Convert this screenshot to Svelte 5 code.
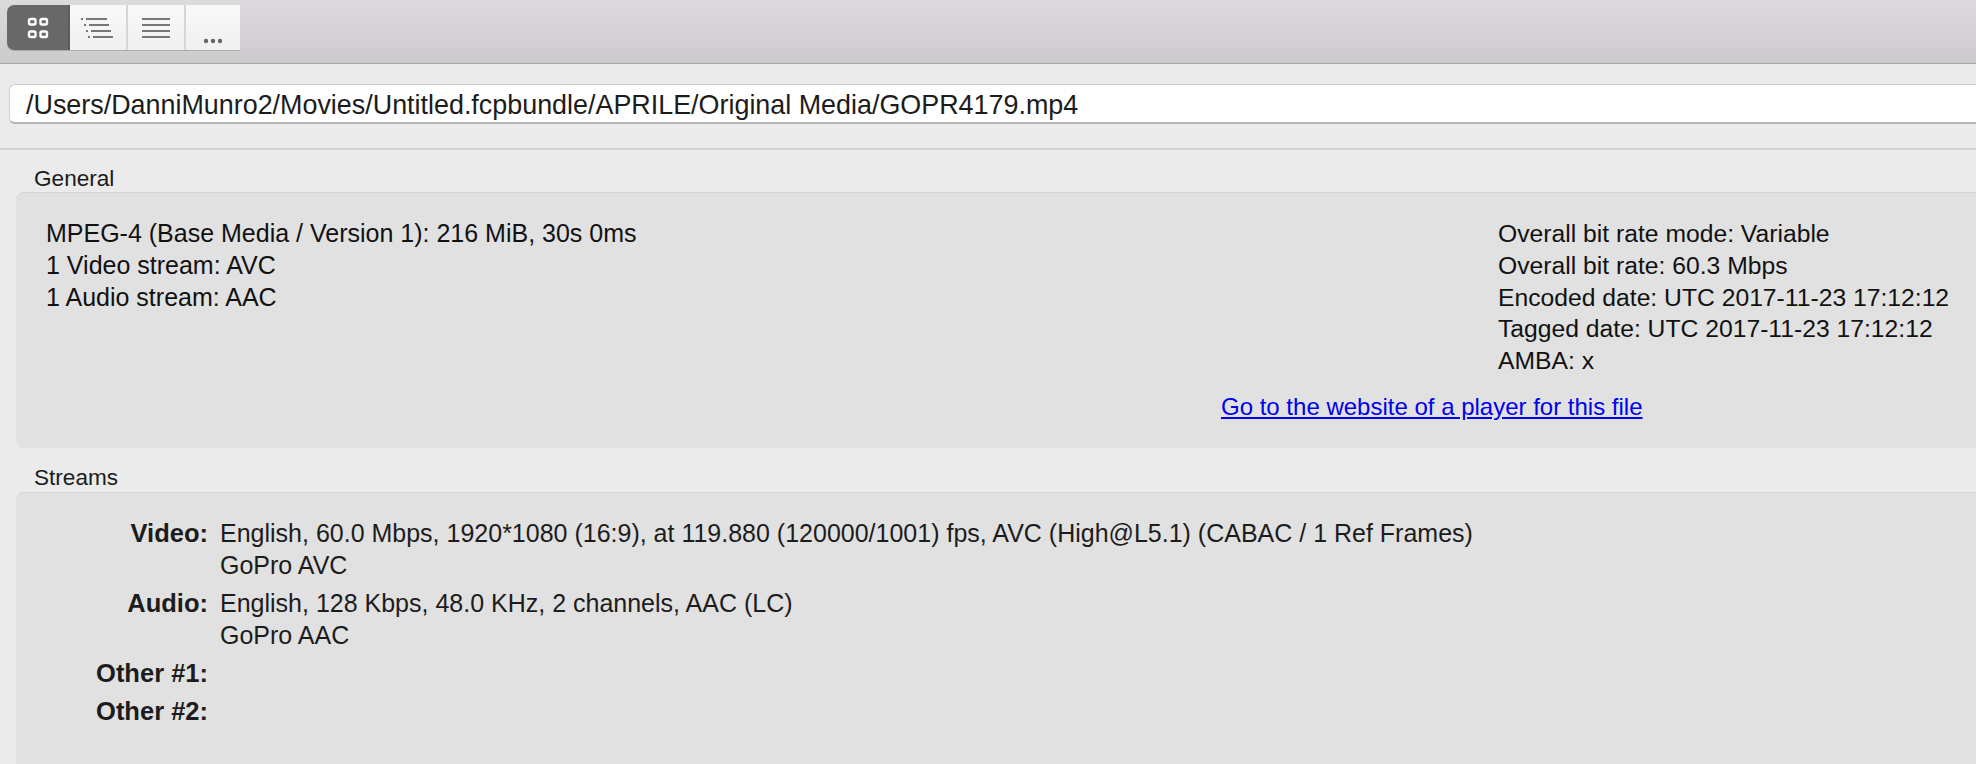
<script>
  const general = ['MPEG-4 (Base Media / Version 1): 216 MiB, 30s 0ms', '1 Video stream: AVC', '1 Audio stream: AAC'];
  const generalRight = [
    'Overall bit rate mode: Variable',
    'Overall bit rate: 60.3 Mbps',
    'Encoded date: UTC 2017-11-23 17:12:12',
    'Tagged date: UTC 2017-11-23 17:12:12',
    'AMBA: x'
  ];
  const streams = [
    { label: 'Video:', lines: ['English, 60.0 Mbps, 1920*1080 (16:9), at 119.880 (120000/1001) fps, AVC (High@L5.1) (CABAC / 1 Ref Frames)', 'GoPro AVC'] },
    { label: 'Audio:', lines: ['English, 128 Kbps, 48.0 KHz, 2 channels, AAC (LC)', 'GoPro AAC'] },
    { label: 'Other #1:', lines: [''] },
    { label: 'Other #2:', lines: [''] }
  ];
</script>

<div class="window">
  <div class="toolbar">
    <div class="segments">
      <div class="seg active">
        <svg width="22" height="22" viewBox="0 0 22 22" fill="none" stroke="#fff" stroke-width="2.4">
          <rect x="2" y="2" width="6.500" height="5.500" rx="1.500" />
          <rect x="13.500" y="2" width="6.500" height="5.500" rx="1.500" />
          <rect x="2" y="14.500" width="6.500" height="5.500" rx="1.500" />
          <rect x="13.500" y="14.500" width="6.500" height="5.500" rx="1.500" />
        </svg>
      </div>
      <div class="seg">
        <svg width="34" height="22" viewBox="0 0 34 22" stroke="#777" stroke-width="2">
          <path d="M0 2h2M5 2h21M3 8h2M8 8h20M5 14h2M10 14h20M7 20h2M12 20h20" />
        </svg>
      </div>
      <div class="seg">
        <svg width="30" height="22" viewBox="0 0 30 22" stroke="#777" stroke-width="2">
          <path d="M1 2h28M1 8h28M1 14h28M1 20h28" />
        </svg>
      </div>
      <div class="seg more">
        <svg width="20" height="6" viewBox="0 0 20 6" fill="#666">
          <circle cx="3" cy="3" r="2.200" /><circle cx="10" cy="3" r="2.200" /><circle cx="17" cy="3" r="2.200" />
        </svg>
      </div>
    </div>
  </div>

  <div class="path-row">
    <div class="path">/Users/DanniMunro2/Movies/Untitled.fcpbundle/APRILE/Original Media/GOPR4179.mp4</div>
  </div>

  <div class="content">
    <div class="group-title">General</div>
    <section class="box general">
      <div class="columns">
        <div>
          {#each general as line}
            <div class="line">{line}</div>
          {/each}
        </div>
        <div class="right">
          {#each generalRight as line}
            <div class="line">{line}</div>
          {/each}
        </div>
      </div>
      <a class="player-link" href="#player">Go to the website of a player for this file</a>
    </section>

    <div class="group-title streams-title">Streams</div>
    <section class="box streams">
      {#each streams as s}
        <div class="stream">
          <div class="label">{s.label}</div>
          <div class="value">
            {#each s.lines as l}
              <div class="vline">{l}</div>
            {/each}
          </div>
        </div>
      {/each}
    </section>
  </div>
</div>

<style>
  :global(body) {
    background: #ebebeb;
    overflow: hidden;
  }
  .window {
    width: 1976px;
    height: 764px;
    overflow: hidden;
    background: #ebebeb;
    font-family: "Liberation Sans", Arial, sans-serif;
    color: #1c1c1c;
  }
  .toolbar {
    box-sizing: border-box;
    height: 64px;
    padding: 5px 0 0 7px;
    background: linear-gradient(#dcdadc, #cccacc);
    border-bottom: 1px solid #a9a8a9;
  }
  .segments {
    display: flex;
    width: 233px;
    height: 45px;
    border-radius: 7px 0 0 7px;
    overflow: hidden;
    background: #f4f4f4;
    box-shadow: 0 1px 0 #aaa;
  }
  .seg {
    box-sizing: border-box;
    width: 58px;
    display: flex;
    align-items: center;
    justify-content: center;
    background: linear-gradient(#f9f9f9, #f0f0f0);
    border-right: 2px solid #d6d6d6;
  }
  .seg.active {
    width: 63px;
    background: #686868;
    border-right-color: #5c5c5c;
  }
  .seg.more {
    flex: 1;
    border-right: 0;
    padding-top: 26px;
  }
  .path-row {
    box-sizing: border-box;
    height: 86px;
    padding-top: 20px;
    padding-left: 9px;
    border-bottom: 2px solid #d2d2d2;
  }
  .path {
    box-sizing: border-box;
    height: 40px;
    line-height: 40px;
    padding-left: 16px;
    background: #fff;
    border-top: 1px solid #d0d0d0;
    border-bottom: 2px solid #b5b5b5;
    border-left: 1px solid #d0d0d0;
    border-radius: 6px 0 0 6px;
    font-size: 26.900px;
  }
  .content {
    padding-left: 16px;
  }
  .group-title {
    height: 42px;
    padding: 18px 0 0 18px;
    box-sizing: border-box;
    font-size: 22.600px;
    line-height: 22px;
  }
  .box {
    box-sizing: border-box;
    background: #e1e1e1;
    border-top: 1px solid #d4d4d4;
    border-radius: 8px 0 0 8px;
  }
  .general {
    height: 256px;
    padding: 25px 0 0 30px;
  }
  .columns {
    display: flex;
    justify-content: space-between;
    width: 1930px;
  }
  .right {
    width: 478px;
    flex: none;
    font-size: 24.700px;
  }
  .line {
    line-height: 31.800px;
    color: #111;
    white-space: nowrap;
  }
  .columns > div:first-child {
    font-size: 25px;
  }
  .player-link {
    display: block;
    margin: 15px 0 0 1175px;
    font-size: 24px;
    line-height: 30px;
    color: #0000ee;
    white-space: nowrap;
  }
  .streams-title {
    height: 44px;
    padding-top: 19px;
  }
  .streams {
    height: 280px;
    padding-top: 24px;
  }
  .stream {
    display: flex;
    margin-bottom: 6px;
    font-size: 25px;
    line-height: 32px;
  }
  .label {
    width: 192px;
    flex: none;
    text-align: right;
    font-weight: 700;
    font-size: 25.500px;
    white-space: nowrap;
  }
  .value {
    padding-left: 12px;
    white-space: nowrap;
  }
  .vline {
    min-height: 32px;
  }
</style>
